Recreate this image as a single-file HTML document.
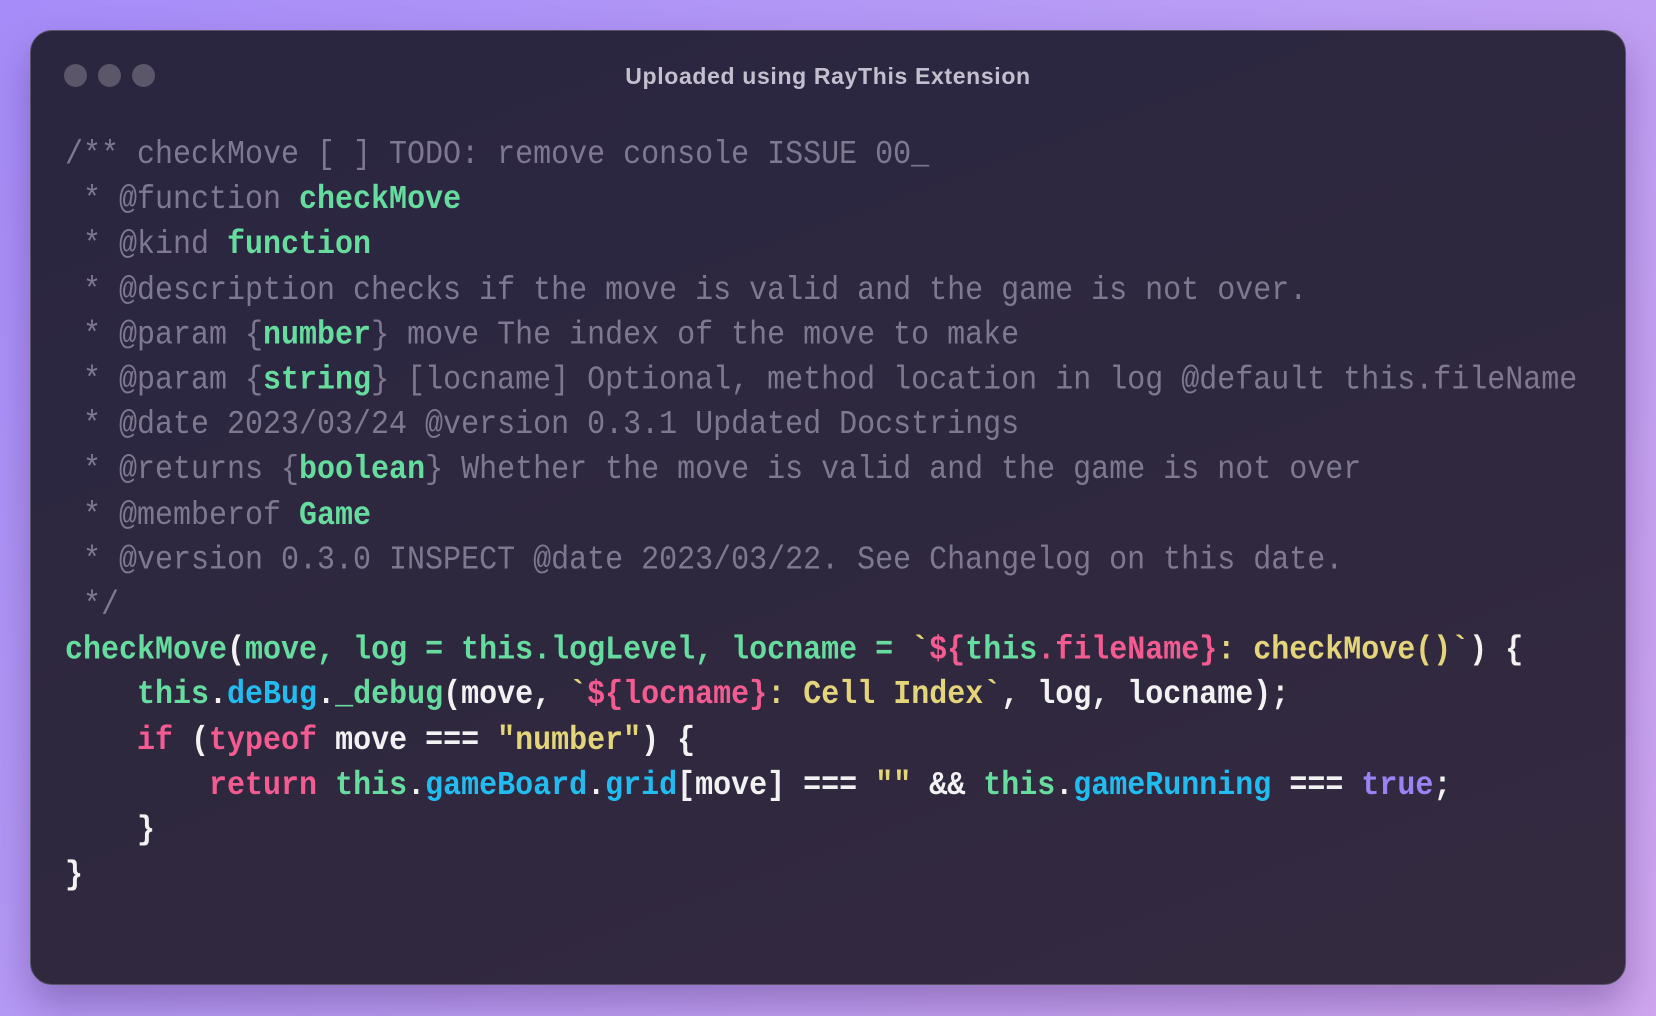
<!DOCTYPE html>
<html><head><meta charset="utf-8"><style>
html,body{margin:0;padding:0;width:1656px;height:1016px;overflow:hidden}
body{background:linear-gradient(135deg,#a58cf8 0%,#b89cf5 45%,#cfa6ef 100%);position:relative;font-family:"Liberation Sans",sans-serif}
.win{position:absolute;left:30px;top:30px;width:1596px;height:955px;border-radius:22px;background:linear-gradient(160deg,#2a2640 0%,#2f283f 60%,#352a40 100%);border:1.5px solid #5a5468;box-shadow:0 20px 40px rgba(60,30,100,.35);box-sizing:border-box}
.dot{position:absolute;top:64px;width:23px;height:23px;border-radius:50%;background:#5b5669}
.title{position:absolute;left:0;right:0;top:63px;text-align:center;color:#c3bfcf;font-size:23px;font-weight:bold;letter-spacing:.65px}
pre{position:absolute;left:65px;top:133px;margin:0;font-family:"Liberation Mono",monospace;font-size:30px;line-height:40.2px;color:#7e7891;white-space:pre;transform:scaleY(1.12);transform-origin:0 0}
.g{color:#66dc9e;font-weight:bold}
.w{color:#f2f2f2;font-weight:bold}
.p{color:#f35b91;font-weight:bold}
.y{color:#e4d47a;font-weight:bold}
.c{color:#22bdf0;font-weight:bold}
.v{color:#9a84f5;font-weight:bold}
</style></head><body>
<div class="win"></div>
<div class="dot" style="left:64px"></div><div class="dot" style="left:98px"></div><div class="dot" style="left:132px"></div>
<div class="title">Uploaded using RayThis Extension</div>
<pre>/** checkMove [ ] TODO: remove console ISSUE 00_
 * @function <span class="g">checkMove</span>
 * @kind <span class="g">function</span>
 * @description checks if the move is valid and the game is not over.
 * @param {<span class="g">number</span>} move The index of the move to make
 * @param {<span class="g">string</span>} [locname] Optional, method location in log @default this.fileName
 * @date 2023/03/24 @version 0.3.1 Updated Docstrings
 * @returns {<span class="g">boolean</span>} Whether the move is valid and the game is not over
 * @memberof <span class="g">Game</span>
 * @version 0.3.0 INSPECT @date 2023/03/22. See Changelog on this date.
 */
<span class="g">checkMove</span><span class="w">(</span><span class="g">move, log = this.logLevel, locname = </span><span class="y">`</span><span class="p">${</span><span class="g">this</span><span class="p">.fileName}</span><span class="y">: checkMove()`</span><span class="w">) {</span>
<span class="g">    this</span><span class="w">.</span><span class="c">deBug</span><span class="w">.</span><span class="g">_debug</span><span class="w">(move, </span><span class="y">`</span><span class="p">${locname}</span><span class="y">: Cell Index`</span><span class="w">, log, locname);</span>
<span class="p">    if</span><span class="w"> (</span><span class="p">typeof</span><span class="w"> move === </span><span class="y">"number"</span><span class="w">) {</span>
<span class="p">        return</span> <span class="g">this</span><span class="w">.</span><span class="c">gameBoard</span><span class="w">.</span><span class="c">grid</span><span class="w">[move] === </span><span class="y">""</span><span class="w"> &amp;&amp; </span><span class="g">this</span><span class="w">.</span><span class="c">gameRunning</span><span class="w"> === </span><span class="v">true</span><span class="w">;</span>
<span class="w">    }</span>
<span class="w">}</span></pre>
</body></html>
